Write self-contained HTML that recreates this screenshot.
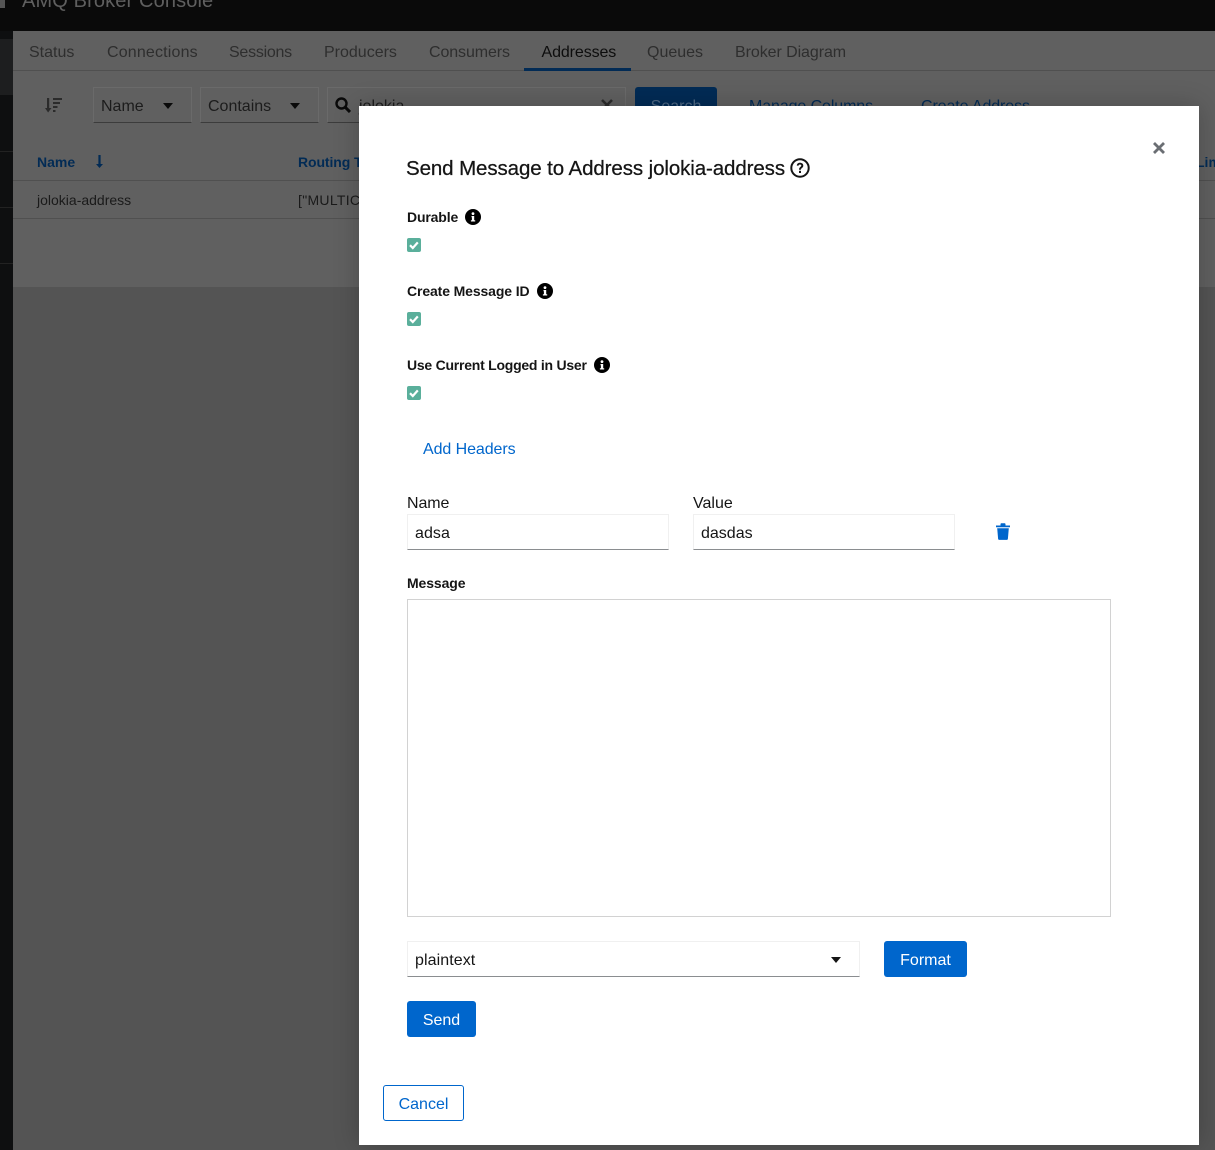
<!DOCTYPE html>
<html lang="en">
<head>
<meta charset="utf-8">
<title>Send Message to Address</title>
<style>
html,body{margin:0;padding:0;width:1215px;height:1150px;overflow:hidden;background:#545454}
body{font-family:"Liberation Sans",sans-serif;font-size:16px;position:relative}
.a{position:absolute;box-sizing:border-box}
.t{position:absolute;white-space:nowrap;line-height:20px;height:20px}
.tab{color:#2e2e2e;top:43px}
.b{font-weight:700;font-size:14px;color:#151515}
.in{position:absolute;box-sizing:border-box;height:36px;border:1px solid #f0f0f0;border-bottom:1px solid #8a8d90;background:#fff}
.btn{position:absolute;box-sizing:border-box;height:36px;border-radius:3px;background:#06c;color:#fff;text-align:center;line-height:40px}
.fl{position:absolute;box-sizing:border-box;top:87px;height:36px;border:1px solid #6a6a6a;border-bottom:1px solid #3c3c3c}
svg{position:absolute;display:block}
</style>
</head>
<body>
<!-- top bar -->
<div class="a" style="left:0;top:0;width:1215px;height:31px;background:#0a0a0a"></div>
<div class="a" style="left:0;top:0;width:5px;height:8px;background:#555"></div>
<div class="t" style="left:22px;top:-9px;font-size:20px;color:#5f5f5f;letter-spacing:.13px">AMQ Broker Console</div>
<!-- sidebar -->
<div class="a" style="left:0;top:31px;width:13px;height:1119px;background:#0e0f10"></div>
<div class="a" style="left:0;top:39px;width:13px;height:56px;background:#1d1e1f"></div>
<div class="a" style="left:0;top:151px;width:13px;height:1px;background:#222"></div>
<div class="a" style="left:0;top:207px;width:13px;height:1px;background:#222"></div>
<div class="a" style="left:0;top:263px;width:13px;height:1px;background:#222"></div>
<!-- main -->
<div class="a" style="left:13px;top:31px;width:1202px;height:256px;background:#606060"></div>
<div class="a" style="left:13px;top:287px;width:1202px;height:863px;background:#545454"></div>
<!-- tabs -->
<div class="t tab" style="left:29px">Status</div>
<div class="t tab" style="left:107px;letter-spacing:.17px">Connections</div>
<div class="t tab" style="left:229px;letter-spacing:-.25px">Sessions</div>
<div class="t tab" style="left:324px">Producers</div>
<div class="t tab" style="left:429px;letter-spacing:-.1px">Consumers</div>
<div class="t tab" style="left:541.500px;color:#0d0d0d;letter-spacing:-.1px">Addresses</div>
<div class="t tab" style="left:647px">Queues</div>
<div class="t tab" style="left:735px;letter-spacing:-.07px">Broker Diagram</div>
<div class="a" style="left:13px;top:70px;width:1202px;height:1px;background:#505050"></div>
<div class="a" style="left:524px;top:68px;width:107px;height:3px;background:#022b55"></div>
<!-- toolbar -->
<svg style="left:45px;top:98px" width="17" height="15" viewBox="0 0 17 15" fill="#2b2b2b"><path d="M2 0h2.200v10H6.500l-3.400 4.500L0 10h2z"/><rect x="8" y="0" width="9" height="2"/><rect x="8" y="4" width="7" height="2"/><rect x="8" y="8" width="4.500" height="2"/><rect x="8" y="12" width="2.500" height="2"/></svg>
<div class="fl" style="left:93px;width:99px"></div>
<div class="t" style="left:101px;top:97px;color:#1c1c1c">Name</div>
<svg style="left:163px;top:103px" width="10" height="6" viewBox="0 0 10 6" fill="#0a0a0a"><path d="M0 0h10L5 6z"/></svg>
<div class="fl" style="left:200px;width:119px"></div>
<div class="t" style="left:208px;top:97px;color:#1c1c1c">Contains</div>
<svg style="left:290px;top:103px" width="10" height="6" viewBox="0 0 10 6" fill="#0a0a0a"><path d="M0 0h10L5 6z"/></svg>
<div class="fl" style="left:327px;width:299px"></div>
<svg style="left:335px;top:97px" width="16" height="16" viewBox="0 0 16 16" fill="none" stroke="#0a0a0a" stroke-width="2.400"><circle cx="6.500" cy="6.500" r="5"/><path d="M10.300 10.300L15 15" stroke-width="3"/></svg>
<div class="t" style="left:359px;top:97px;color:#1c1c1c">jolokia</div>
<svg style="left:601px;top:99px" width="12" height="12" viewBox="0 0 12 12" stroke="#2b2b2b" stroke-width="2.600"><path d="M1 1l10 10M11 1L1 11"/></svg>
<div class="btn" style="left:635px;top:87px;width:82px;background:#022b55;color:#4f6985">Search</div>
<div class="t" style="left:749px;top:97px;color:#022b55;letter-spacing:-.1px">Manage Columns</div>
<div class="t" style="left:921px;top:97px;color:#022b55;letter-spacing:-.1px">Create Address</div>
<!-- table -->
<div class="t" style="left:37px;top:152px;font-size:14px;font-weight:700;color:#022b55">Name</div>
<svg style="left:96px;top:155px" width="7" height="13" viewBox="0 0 7 13" fill="#022b55"><path d="M2.400 0h2.200v9H7l-3.500 4L0 9h2.400z"/></svg>
<div class="t" style="left:298px;top:152px;font-size:14px;font-weight:700;color:#022b55;letter-spacing:-.1px">Routing T</div>
<div class="t" style="left:1196px;top:152px;font-size:14px;font-weight:700;color:#022b55">Limit</div>
<div class="a" style="left:13px;top:180px;width:1202px;height:1px;background:#505050"></div>
<div class="t" style="left:37px;top:190px;font-size:14px;color:#1a1a1a">jolokia-address</div>
<div class="t" style="left:298px;top:190px;font-size:14px;color:#1a1a1a;letter-spacing:.3px">["MULTICAST"]</div>
<div class="a" style="left:13px;top:218px;width:1202px;height:1px;background:#505050"></div>

<!-- modal -->
<div class="a" style="left:359px;top:106px;width:840px;height:1039px;background:#fff;box-shadow:0 0 24px rgba(0,0,0,.22)"></div>
<svg style="left:1153px;top:142px" width="12" height="12" viewBox="0 0 12 12" stroke="#6a6e73" stroke-width="2.800"><path d="M1 1l10 10M11 1L1 11"/></svg>
<div class="t" style="left:406px;top:159px;font-size:20.5px;color:#151515;letter-spacing:-.1px;-webkit-text-stroke:.25px #151515">Send Message to Address jolokia-address</div>
<svg style="left:790px;top:158px" width="20" height="20" viewBox="0 0 20 20"><circle cx="10" cy="10" r="8.700" fill="none" stroke="#151515" stroke-width="2"/><path d="M6.800 7.600C7 5.600 8.400 4.800 10 4.800c1.900 0 3.300 1.100 3.300 2.800 0 2.300-2.400 2.300-2.400 4.200H9c0-2.900 2.300-2.900 2.300-4.200 0-.7-.6-1.100-1.300-1.100-.8 0-1.300.4-1.400 1.100z" fill="#151515"/><rect x="9" y="12.800" width="2" height="2.200" fill="#151515"/></svg>

<div class="t b" style="left:407px;top:207px;letter-spacing:-.15px">Durable</div>
<svg style="left:465px;top:209px" width="16" height="16" viewBox="0 0 16 16"><circle cx="8" cy="8" r="8" fill="#000"/><path d="M6.500 7h2.700v4.300h1v1.200H5.900v-1.200h1V8.200h-.4z" fill="#fff"/><circle cx="8" cy="4.600" r="1.400" fill="#fff"/></svg>
<svg style="left:407px;top:238px" width="14" height="14" viewBox="0 0 14 14"><rect width="14" height="14" rx="2" fill="#5aaf9b"/><path d="M3 7.200l2.800 2.800 5-5.600" fill="none" stroke="#fff" stroke-width="2.200"/></svg>

<div class="t b" style="left:407px;top:281px;letter-spacing:-.12px">Create Message ID</div>
<svg style="left:537px;top:283px" width="16" height="16" viewBox="0 0 16 16"><circle cx="8" cy="8" r="8" fill="#000"/><path d="M6.500 7h2.700v4.300h1v1.200H5.900v-1.200h1V8.200h-.4z" fill="#fff"/><circle cx="8" cy="4.600" r="1.400" fill="#fff"/></svg>
<svg style="left:407px;top:312px" width="14" height="14" viewBox="0 0 14 14"><rect width="14" height="14" rx="2" fill="#5aaf9b"/><path d="M3 7.200l2.800 2.800 5-5.600" fill="none" stroke="#fff" stroke-width="2.200"/></svg>

<div class="t b" style="left:407px;top:355px;letter-spacing:-.24px">Use Current Logged in User</div>
<svg style="left:594px;top:357px" width="16" height="16" viewBox="0 0 16 16"><circle cx="8" cy="8" r="8" fill="#000"/><path d="M6.500 7h2.700v4.300h1v1.200H5.900v-1.200h1V8.200h-.4z" fill="#fff"/><circle cx="8" cy="4.600" r="1.400" fill="#fff"/></svg>
<svg style="left:407px;top:386px" width="14" height="14" viewBox="0 0 14 14"><rect width="14" height="14" rx="2" fill="#5aaf9b"/><path d="M3 7.200l2.800 2.800 5-5.600" fill="none" stroke="#fff" stroke-width="2.200"/></svg>

<div class="t" style="left:423px;top:440px;color:#06c;letter-spacing:-.08px">Add Headers</div>

<div class="t" style="left:407px;top:494px;color:#151515;letter-spacing:-.1px">Name</div>
<div class="in" style="left:407px;top:514px;width:262px"></div>
<div class="t" style="left:415px;top:524px;color:#151515;letter-spacing:.05px">adsa</div>
<div class="t" style="left:693px;top:494px;color:#151515">Value</div>
<div class="in" style="left:693px;top:514px;width:262px"></div>
<div class="t" style="left:701px;top:524px;color:#151515">dasdas</div>
<svg style="left:996px;top:523px" width="14" height="17" viewBox="0 0 14 17" fill="#06c"><path d="M0 2.500h4.500V1.200C4.500.6 5 .3 5.500.3h3c.5 0 1 .3 1 .9v1.300H14v1.800H0z"/><path d="M1.200 5.300h11.600l-.9 10.400c-.1.700-.6 1.200-1.300 1.200H3.400c-.7 0-1.200-.5-1.300-1.200z"/></svg>

<div class="t b" style="left:407px;top:573px;letter-spacing:-.1px">Message</div>
<div class="a" style="left:407px;top:599px;width:704px;height:318px;border:1px solid #d2d2d2"></div>

<div class="in" style="left:407px;top:941px;width:453px"></div>
<div class="t" style="left:415px;top:951px;color:#151515;letter-spacing:.08px">plaintext</div>
<svg style="left:831px;top:957px" width="10" height="6" viewBox="0 0 10 6" fill="#151515"><path d="M0 0h10L5 6z"/></svg>
<div class="btn" style="left:884px;top:941px;width:83px">Format</div>
<div class="btn" style="left:407px;top:1001px;width:69px">Send</div>
<div class="btn" style="left:383px;top:1085px;width:81px;background:#fff;color:#06c;border:1px solid #06c;line-height:38px">Cancel</div>
</body>
</html>
